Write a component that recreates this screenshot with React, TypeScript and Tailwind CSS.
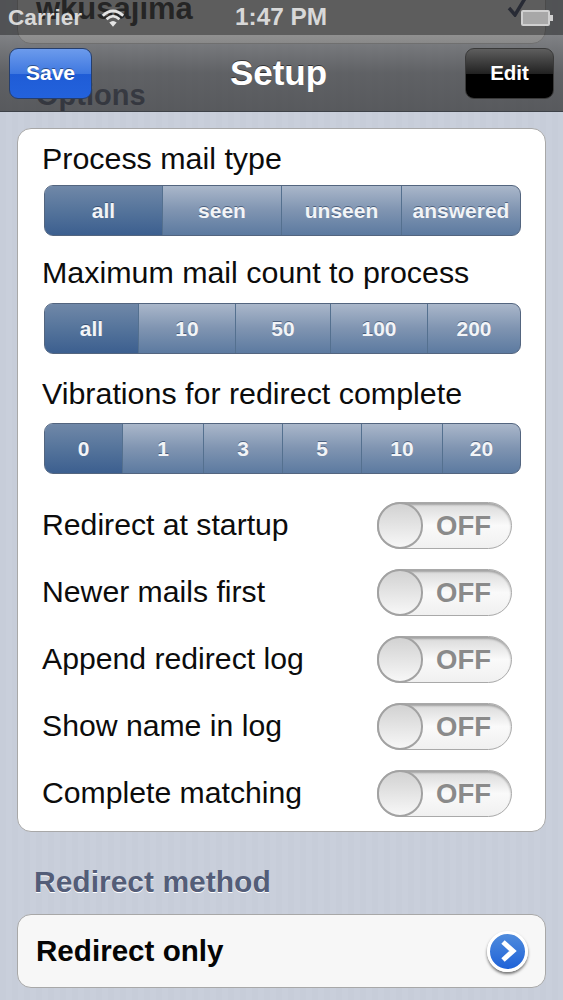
import React from 'react';

const font = "font-['Liberation_Sans',Arimo,Helvetica,Arial,sans-serif]";

const Segmented: React.FC<{ items: string[]; widths: string[] }> = ({ items, widths }) => {
  return (
    <div className="flex h-[51px] overflow-hidden rounded-[9px] border border-[#53657f] bg-gradient-to-b from-[#aab7ca] via-[#7f94b1] to-[#5c7aa0]">
      {items.map((item, i) => (
        <div
          key={item}
          className={`${widths[i]} ${i === 0 ? 'bg-gradient-to-b from-[#7088a8] via-[#55749b] to-[#3c5f8f]' : ''} ${i < items.length - 1 ? 'border-r border-[#54708f]' : ''} flex items-center justify-center text-[21px] font-bold text-[#f2f4f7] [text-shadow:0_-1px_0_rgba(40,60,90,0.6)]`}
        >
          {item}
        </div>
      ))}
    </div>
  );
};

const OffSwitch: React.FC = () => {
  return (
    <div className="relative h-[47px] w-[135px] shrink-0 rounded-full border border-[#a9a9a9] bg-gradient-to-b from-[#d9d9d9] via-[#fafafa] to-[#f0f0f0] shadow-[inset_0_2px_2px_rgba(0,0,0,0.25)]">
      <div className="absolute right-[20px] top-[7px] text-[27.5px] leading-[32px] font-bold text-[#8a8a8a]">OFF</div>
      <div className="absolute -left-px -top-px h-[47px] w-[46px] rounded-full border-2 border-[#a2a2a2] bg-gradient-to-b from-[#d2d2d2] to-[#f7f7f7]" />
    </div>
  );
};

const SwitchRow: React.FC<{ label: string }> = ({ label }) => {
  return (
    <div className="-ml-[2px] mr-[9px] flex h-[47px] items-center justify-between">
      <span className="text-[30.2px] leading-none text-[#0c0c0c]">{label}</span>
      <OffSwitch />
    </div>
  );
};

export default function App() {
  return (
    <div className={`${font} relative h-[1000px] w-[563px] overflow-hidden bg-[#c8ced9] bg-[repeating-linear-gradient(90deg,#c7cdd9_0px,#c7cdd9_6px,#c9cfdb_6px,#c9cfdb_12px)]`}>
      {/* scrolled content, runs under the bars */}
      <div className="flex flex-col px-[17px]">
        <div className="-mt-[26px] flex h-[70px] items-center justify-between rounded-b-[14px] border border-[#a9a9a9] bg-white pl-[18px] pr-[16px]">
          <span className="text-[31px] font-bold text-black">wkusajima</span>
          <svg width="22" height="22" viewBox="0 0 22 22" className="-mt-[6px]">
            <path d="M2 13 L8 20 L20 0" fill="none" stroke="#0f1c4a" strokeWidth="3.5" />
          </svg>
        </div>
        <div className="mt-[34px] h-[50px] pl-[19px] text-[29px] leading-[34px] font-bold text-[#4d5670]">Options</div>

        <div className="rounded-[14px] border border-[#a8a8a8] bg-white pb-[14px] pl-[26px] pr-[24px] pt-[11px]">
          <div className="-ml-[2px] text-[30.4px] leading-[36px] text-[#0c0c0c]">Process mail type</div>
          <div className="mt-[9px]">
            <Segmented
              items={['all', 'seen', 'unseen', 'answered']}
              widths={['w-[118px]', 'w-[119px]', 'w-[120px]', 'flex-1']}
            />
          </div>
          <div className="-ml-[2px] mt-[18px] text-[30.4px] leading-[36px] text-[#0c0c0c]">Maximum mail count to process</div>
          <div className="mt-[13px]">
            <Segmented
              items={['all', '10', '50', '100', '200']}
              widths={['w-[94px]', 'w-[97px]', 'w-[95px]', 'w-[97px]', 'flex-1']}
            />
          </div>
          <div className="-ml-[2px] mt-[21px] text-[30.4px] leading-[36px] text-[#0c0c0c]">Vibrations for redirect complete</div>
          <div className="mt-[12px]">
            <Segmented
              items={['0', '1', '3', '5', '10', '20']}
              widths={['w-[78px]', 'w-[81px]', 'w-[79px]', 'w-[79px]', 'w-[81px]', 'flex-1']}
            />
          </div>
          <div className="mt-[28px] flex flex-col gap-[20px]">
            <SwitchRow label="Redirect at startup" />
            <SwitchRow label="Newer mails first" />
            <SwitchRow label="Append redirect log" />
            <SwitchRow label="Show name in log" />
            <SwitchRow label="Complete matching" />
          </div>
        </div>

        <div className="mt-[33px] pl-[17px] text-[30px] leading-[34px] font-bold text-[#535d78] [text-shadow:0_1px_0_#fff]">Redirect method</div>
        <div className="mt-[15px] flex h-[74px] items-center justify-between rounded-[14px] border border-[#a8a8a8] bg-[#f7f7f7] pl-[18px] pr-[17px]">
          <span className="text-[29.6px] font-bold text-[#050505]">Redirect only</span>
          <div className="flex h-[41px] w-[41px] items-center justify-center rounded-full border-[3px] border-white bg-gradient-to-b from-[#4f8bdc] to-[#1f62d8] shadow-[0_2px_3px_rgba(0,0,0,0.55)]">
            <svg width="24" height="24" viewBox="0 0 24 24">
              <path d="M7 3 L17 12 L7 21" fill="none" stroke="#fff" strokeWidth="5" />
            </svg>
          </div>
        </div>
      </div>

      {/* status bar */}
      <div className="absolute inset-x-0 top-0 h-[35px] bg-[#2f2f2f]/[0.78] font-bold text-[#d8d8d8]">
        <span className="absolute left-[8px] top-[5px] text-[22.6px] leading-[26px]">Carrier</span>
        <svg width="24" height="21" viewBox="0 0 26 22" className="absolute left-[101px] top-[7px]">
          <path d="M2 9 Q13 -1 24 9" fill="none" stroke="#e4e4e4" strokeWidth="3" />
          <path d="M6 13 Q13 6 20 13" fill="none" stroke="#e4e4e4" strokeWidth="3" />
          <path d="M13 21 L9 16.5 Q13 13 17 16.5 Z" fill="#e4e4e4" />
        </svg>
        <span className="absolute left-[235px] top-[4px] text-[24.4px] leading-[26px]">1:47 PM</span>
        <div className="absolute left-[521px] top-[10px] flex items-center">
          <div className="h-[16px] w-[29px] rounded-[2px] border-2 border-[#d0d0d0] bg-[#a8a8a8]" />
          <div className="h-[6px] w-[3px] bg-[#d0d0d0]" />
        </div>
      </div>

      {/* nav bar */}
      <div className="absolute inset-x-0 top-[35px] flex h-[77px] items-center justify-between border-b border-[#3e4248] bg-gradient-to-b from-[#616161]/70 via-[#333333]/70 to-[#282828]/70 pl-[9px] pr-[9px]">
        <div className="flex h-[51px] w-[83px] items-center justify-center rounded-[9px] border border-[#253e6d] bg-[linear-gradient(#6c9bec,#3f78e0_50%,#1f5cd6_50%,#2362dc)] text-[21px] font-bold text-white [text-shadow:0_-1px_0_rgba(0,0,0,0.4)]">
          Save
        </div>
        <div className="-mt-[2px] text-[35px] leading-none font-bold text-white [text-shadow:0_-1px_0_rgba(0,0,0,0.5)]">Setup</div>
        <div className="flex h-[51px] w-[89px] items-center justify-center rounded-[9px] border border-[#3a3a3a] bg-[linear-gradient(#5e5e5e,#222_50%,#000_50%,#000)] text-[20.5px] font-bold text-white">
          Edit
        </div>
      </div>
    </div>
  );
}
